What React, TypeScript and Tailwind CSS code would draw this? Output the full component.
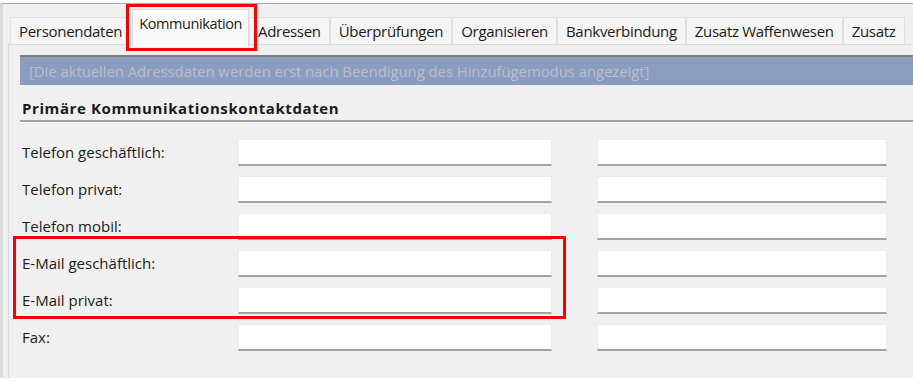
import React from 'react';

const tabs = [
  'Personendaten',
  'Kommunikation',
  'Adressen',
  'Überprüfungen',
  'Organisieren',
  'Bankverbindung',
  'Zusatz Waffenwesen',
  'Zusatz',
];

const rows = [
  'Telefon geschäftlich:',
  'Telefon privat:',
  'Telefon mobil:',
  'E-Mail geschäftlich:',
  'E-Mail privat:',
  'Fax:',
];

const Field = ({ className }: { className: string }) => (
  <div
    className={`h-[27px] bg-white border border-[#ececec] border-b-2 border-b-[#a3a3a3] ${className}`}
  />
);

const App = () => {
  return (
    <div
      className="relative w-[913px] h-[381px] overflow-hidden bg-white text-[#1b1b1b]"
      style={{ fontFamily: '"Open Sans", "Noto Sans", sans-serif' }}
    >
      <div className="mt-[3px] h-[375px] border-t border-l-[3px] border-t-[#a8a8a8] border-l-[#dcdcdc] bg-[#f0f0f0] flex flex-col">
        {/* Tabs */}
        <div className="flex items-end h-[40px] pl-[7px] shrink-0">
          {tabs.map((tab, i) =>
            i === 1 ? (
              <div
                key={tab}
                className="h-[38px] mb-[-3px] ml-[1px] px-[6px] pb-[9px] flex items-center bg-[#fafafa] border border-[#d9d9d9] border-b-0 text-[14.5px] leading-none relative z-10 tracking-[-0.4px] whitespace-nowrap"
              >
                {tab}
              </div>
            ) : (
              <div
                key={tab}
                className="h-[27px] px-[8px] flex items-center bg-[#f5f5f5] border border-[#e1e1e1] border-b-0 text-[15px] leading-none whitespace-nowrap tracking-[-0.3px]"
              >
                {tab}
              </div>
            )
          )}
        </div>

        {/* Panel */}
        <div className="ml-[5px] flex-1 border-t border-l border-[#dadada] bg-[#f0f0f0] pt-[10px] pl-[11px]">
          <div className="h-[30px] border-t-2 border-[#7d7d7d] bg-[#8a9cbf] flex items-center pl-[9px] text-[15px] text-[#b9bfcb] whitespace-nowrap tracking-[-0.1px]">
            [Die aktuellen Adressdaten werden erst nach Beendigung des Hinzufügemodus angezeigt]
          </div>

          <div className="mt-[16px] pl-[2px] h-[21px] border-b-2 border-[#a3a3a3] font-bold text-[15px] leading-none flex items-start tracking-[0.6px]">
            Primäre Kommunikationskontaktdaten
          </div>
          <div className="h-px bg-white" />

          <div className="mt-[16px] flex flex-col gap-[10px] pl-[2px]">
            {rows.map((label) => (
              <div key={label} className="flex items-center">
                <div className="w-[216px] text-[15px]">{label}</div>
                <Field className="w-[314px]" />
                <Field className="ml-[45px] w-[290px]" />
              </div>
            ))}
          </div>
        </div>
      </div>

      {/* annotation boxes */}
      <div className="absolute left-[126px] top-[4px] w-[131px] h-[47px] border-[3px] border-[#ff0000] z-20" />
      <div className="absolute left-[13px] top-[236px] w-[553px] h-[83px] border-[3px] border-[#ff0000] z-20" />
    </div>
  );
};

export default App;
